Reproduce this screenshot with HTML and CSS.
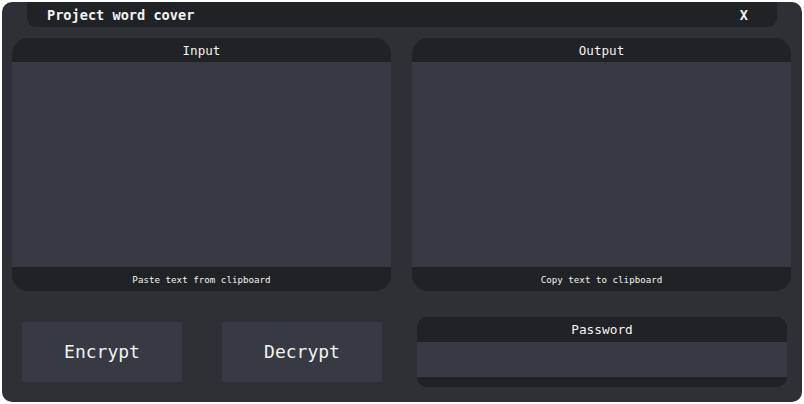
FILE: index.html
```html
<!DOCTYPE html>
<html>
<head>
<meta charset="utf-8">
<link rel="stylesheet" href="styles.css">
</head>
<body>
<div class="window">
  <div class="titlebar">
    <span class="title">Project word cover</span>
    <span class="close">X</span>
  </div>
  <div class="panels">
    <div class="panel">
      <div class="phead">Input</div>
      <div class="pbody"></div>
      <div class="pfoot">Paste text from clipboard</div>
    </div>
    <div class="panel">
      <div class="phead">Output</div>
      <div class="pbody"></div>
      <div class="pfoot">Copy text to clipboard</div>
    </div>
  </div>
  <div class="bottom">
    <div class="btn">Encrypt</div>
    <div class="btn">Decrypt</div>
    <div class="pw">
      <div class="pwhead">Password</div>
      <div class="pwbody"></div>
      <div class="pwfoot"></div>
    </div>
  </div>
</div>
</body>
</html>
```

FILE: styles.css
```css
html, body { margin: 0; background: #ffffff; }
body { padding: 2px; font-family: "DejaVu Sans Mono", "Liberation Mono", monospace; color: #f2f2f2; }
.window {
  width: 800px; height: 400px; box-sizing: border-box;
  background: #2f3035; border-radius: 10px;
  display: flex; flex-direction: column;
}
.titlebar {
  margin: 0 25px; height: 25px; background: #212226;
  border-radius: 0 0 9px 9px;
  display: flex; align-items: center; justify-content: space-between;
  padding: 0 29px 0 20px;
}
.title { font-weight: bold; font-size: 13.6px; }
.close { font-weight: bold; font-size: 13.6px; }
.panels {
  display: grid; grid-template-columns: 379px 379px; column-gap: 21px;
  padding: 11px 0 0 10px;
}
.panel { display: flex; flex-direction: column; height: 253px; border-radius: 16px; overflow: hidden; background: #212226; }
.phead { height: 24px; display: flex; align-items: center; justify-content: center; font-size: 12.6px; }
.pbody { flex: 1; background: #373a42; }
.pfoot { height: 24px; display: flex; align-items: center; justify-content: center; font-size: 9.2px; }
.bottom { flex: 1; display: flex; align-items: center; padding: 10px 0 0 20px; }
.btn {
  width: 160px; height: 60px; background: #373a42;
  display: flex; align-items: center; justify-content: center;
  font-size: 18px; margin-right: 40px;
}
.btn + .btn { margin-right: 35px; }
.pw { width: 370px; height: 70px; border-radius: 10px; overflow: hidden; background: #212226; display: flex; flex-direction: column; }
.pwhead { height: 25px; display: flex; align-items: center; justify-content: center; font-size: 12.8px; }
.pwbody { height: 35px; background: #373a42; }
.pwfoot { flex: 1; }
```
